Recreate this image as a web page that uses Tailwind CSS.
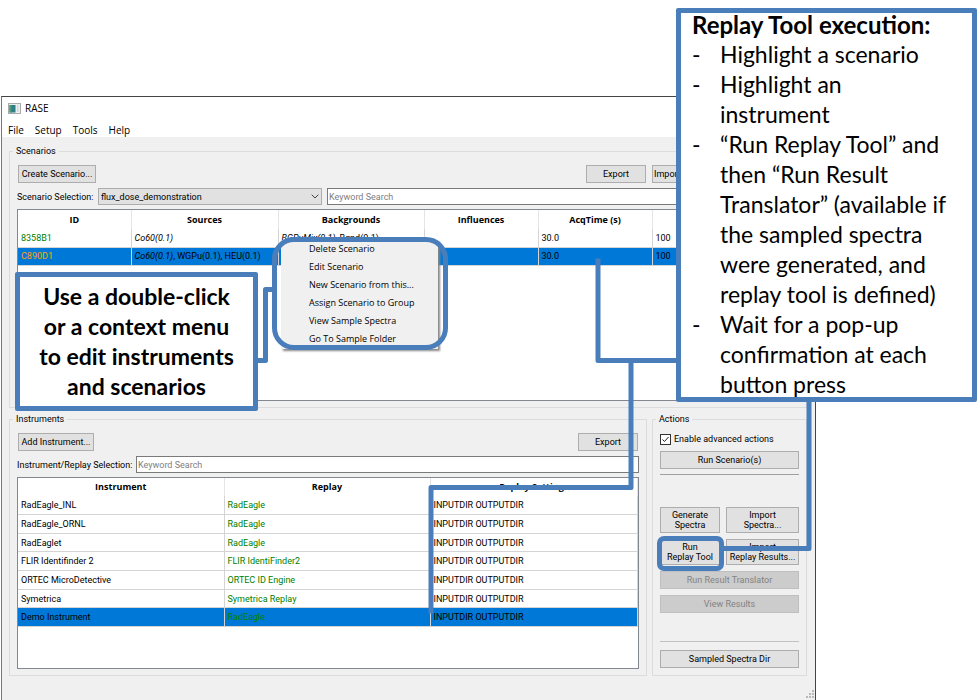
<!DOCTYPE html>
<html lang="en">
<head>
<meta charset="utf-8">
<title>RASE</title>
<script src="https://cdn.jsdelivr.net/npm/@tailwindcss/browser@4"></script>
</head>
<body class="bg-white">
<div class="relative min-h-screen overflow-hidden pt-24 pl-px pr-[163px] font-[Roboto,'Liberation_Sans',sans-serif] text-[9px] leading-3 text-black">

  <!-- Application window -->
  <main class="flex min-h-[604px] flex-col border border-[#444] border-l-[#777] bg-[#f0f0f0]">
    <header class="bg-white font-['Open_Sans',sans-serif]">
      <div class="flex h-[22px] items-center gap-1 pl-[6px]">
        <svg class="h-[11px] w-[13px]" viewBox="0 0 13 11" aria-hidden="true">
          <rect x=".5" y=".5" width="12" height="10" fill="#eee" stroke="#aaa"/>
          <rect x="1.500" y="2" width="6" height="7.500" fill="#2f7f86"/>
          <rect x="1.500" y="2" width="2" height="7.500" fill="#4a9a78"/>
          <rect x="9" y="2" width="1.500" height="7" fill="#c8dce4"/>
        </svg>
        <h1 class="text-[10px]">RASE</h1>
      </div>
      <nav class="flex h-[18px] items-center gap-[11px] pt-[3px] pl-[6px] text-[10px]">
        <a href="#">File</a><a href="#">Setup</a><a href="#">Tools</a><a href="#">Help</a>
      </nav>
    </header>

    <div class="flex flex-1 flex-col gap-[5px] pt-2 pr-2 pb-6 pl-[7px]">
      <fieldset class="border border-[#dcdcdc] px-[7px] pb-[6px]">
        <legend class="-ml-1 px-[3px]">Scenarios</legend>
        <div class="flex gap-[6px] pt-2 pl-px">
          <button class="h-[18px] w-[78px] border border-[#adadad] bg-[#e1e1e1]">Create Scenario...</button>
          <button class="ml-auto h-[18px] w-[60px] border border-[#adadad] bg-[#e1e1e1]">Export</button>
          <button class="h-[18px] w-[147px] border border-[#adadad] bg-[#e1e1e1] pl-px text-left">Import...</button>
        </div>
        <div class="mt-[5px] flex h-[17px] items-center">
          <label for="scenario" class="w-[81px]">Scenario Selection:</label>
          <div class="relative h-[17px] w-56">
            <select id="scenario" class="h-full w-full appearance-none border border-[#adadad] bg-[#e1e1e1] pl-[2px]"><option>flux_dose_demonstration</option></select>
            <svg class="pointer-events-none absolute top-[6px] right-[3px] h-[5px] w-2" viewBox="0 0 8 5" fill="none" stroke="#444" aria-hidden="true"><path d="M.7.7 4 4 7.300.7"/></svg>
          </div>
          <input aria-label="Search scenarios" placeholder="Keyword Search" class="ml-[5px] h-[17px] min-w-0 flex-1 border border-[#7a7a7a] bg-white pl-px placeholder:text-[#808080]">
        </div>
        <div class="mt-1 min-h-48 border border-[#828790] bg-white">
          <table class="h-14 w-full table-fixed border-collapse">
            <colgroup><col class="w-[113px]"><col class="w-[147px]"><col class="w-[146px]"><col class="w-[114px]"><col class="w-[114px]"><col></colgroup>
            <thead class="font-['Open_Sans',sans-serif]">
              <tr class="h-[19px] *:border-r *:border-[#e5e5e5] *:p-0 *:font-bold"><th>ID</th><th>Sources</th><th>Backgrounds</th><th>Influences</th><th>AcqTime (s)</th><th></th></tr>
            </thead>
            <tbody class="*:h-[18px] *:*:border-r *:*:border-b *:*:border-[#d4d4d4] *:*:p-0 *:*:pl-[3px]">
              <tr><td class="text-[#008000]">8358B1</td><td><i>Co60(0.1)</i></td><td><i>BGPuMix(0.1)</i>, Bgnd(0.1)</td><td></td><td>30.0</td><td>100</td></tr>
              <tr class="bg-[#0078d7]"><td class="text-[#ffa500]">C890D1</td><td><i>Co60(0.1)</i>, WGPu(0.1), HEU(0.1)</td><td></td><td></td><td>30.0</td><td>100</td></tr>
            </tbody>
          </table>
        </div>
      </fieldset>

      <div class="flex gap-[5px]">
        <fieldset class="min-w-0 flex-1 border border-[#dcdcdc] px-[7px] pb-[6px]">
          <legend class="-ml-1 px-[3px]">Instruments</legend>
          <div class="flex justify-between px-px pt-2">
            <button class="h-[18px] w-[76px] border border-[#adadad] bg-[#e1e1e1]">Add Instrument...</button>
            <button class="h-[18px] w-[60px] border border-[#adadad] bg-[#e1e1e1]">Export</button>
          </div>
          <div class="mt-[5px] flex h-[17px] items-center">
            <label for="instrument" class="w-[119px]">Instrument/Replay Selection:</label>
            <input id="instrument" placeholder="Keyword Search" class="h-[17px] min-w-0 flex-1 border border-[#7a7a7a] bg-white pl-px placeholder:text-[#808080]">
          </div>
          <div class="mt-1 min-h-48 border border-[#828790] bg-white">
            <table class="h-[149px] w-full table-fixed border-collapse">
              <colgroup><col class="w-[206px]"><col class="w-[206px]"><col></colgroup>
              <thead class="font-['Open_Sans',sans-serif]">
                <tr class="h-[18px] *:border-r *:border-[#e5e5e5] *:p-0 *:font-bold"><th>Instrument</th><th>Replay</th><th>Replay Settings</th></tr>
              </thead>
              <tbody class="*:h-[18px] *:*:border-r *:*:border-b *:*:border-[#d4d4d4] *:*:p-0 *:*:pl-[3px]">
                <tr><td>RadEagle_INL</td><td class="text-[#008000]">RadEagle</td><td>INPUTDIR OUTPUTDIR</td></tr>
                <tr><td>RadEagle_ORNL</td><td class="text-[#008000]">RadEagle</td><td>INPUTDIR OUTPUTDIR</td></tr>
                <tr><td>RadEaglet</td><td class="text-[#008000]">RadEagle</td><td>INPUTDIR OUTPUTDIR</td></tr>
                <tr><td>FLIR Identifinder 2</td><td class="text-[#008000]">FLIR IdentiFinder2</td><td>INPUTDIR OUTPUTDIR</td></tr>
                <tr><td>ORTEC MicroDetective</td><td class="text-[#008000]">ORTEC ID Engine</td><td>INPUTDIR OUTPUTDIR</td></tr>
                <tr><td>Symetrica</td><td class="text-[#008000]">Symetrica Replay</td><td>INPUTDIR OUTPUTDIR</td></tr>
                <tr class="bg-[#0078d7]"><td>Demo Instrument</td><td class="text-[#008000]">RadEagle</td><td>INPUTDIR OUTPUTDIR</td></tr>
              </tbody>
            </table>
          </div>
        </fieldset>

        <fieldset class="w-[155px] border border-[#dcdcdc] px-[7px] pb-[6px]">
          <legend class="-ml-1 px-[3px]">Actions</legend>
          <div class="flex items-center gap-[3px] pt-2">
            <span class="relative size-[11px]">
              <input id="advanced" type="checkbox" checked class="block size-[11px] appearance-none border border-[#333] bg-white">
              <svg class="pointer-events-none absolute inset-0" viewBox="0 0 11 11" fill="none" stroke="#222" aria-hidden="true"><path d="M2.500 5.500 4.500 7.500 8.500 3"/></svg>
            </span>
            <label for="advanced">Enable advanced actions</label>
          </div>
          <button class="mt-[6px] h-[18px] w-full border border-[#adadad] bg-[#e1e1e1]">Run Scenario(s)</button>
          <hr class="mt-[5px] border-[#a0a0a0]">
          <div class="mt-8 grid grid-cols-[60px_1fr] gap-[6px]">
            <button class="h-[26px] border border-[#adadad] bg-[#e1e1e1] leading-[10px]">Generate<br>Spectra</button>
            <button class="h-[26px] border border-[#adadad] bg-[#e1e1e1] leading-[10px]">Import<br>Spectra...</button>
            <button class="h-[26px] border border-[#adadad] bg-[#e1e1e1] leading-[10px]">Run<br>Replay Tool</button>
            <button class="h-[26px] border border-[#adadad] bg-[#e1e1e1] leading-[10px]">Import<br>Replay Results...</button>
          </div>
          <button disabled class="mt-[6px] h-[18px] w-full border border-[#bfbfbf] bg-[#cccccc] text-[#838383]">Run Result Translator</button>
          <button disabled class="mt-[6px] h-[18px] w-full border border-[#bfbfbf] bg-[#cccccc] text-[#838383]">View Results</button>
          <hr class="mt-7 border-[#c0c0c0]">
          <button class="mt-2 h-[18px] w-full border border-[#adadad] bg-[#e1e1e1]">Sampled Spectra Dir</button>
        </fieldset>
      </div>
    </div>
  </main>

  <!-- Resize grip -->
  <svg class="absolute top-[690px] left-[806px] h-2 w-2" viewBox="0 0 8 8" fill="#b8b8b8" aria-hidden="true"><path d="M6 0h2v2H6zM3 3h2v2H3zM6 3h2v2H6zM0 6h2v2H0zM3 6h2v2H3zM6 6h2v2H6z"/></svg>

  <!-- Context menu -->
  <menu class="absolute top-[240px] left-[281px] w-[157px] bg-[#f0f0f0] pb-px pl-7 font-['Open_Sans',sans-serif] leading-[18px] shadow-[2px_2px_2px_#888]">
    <li>Delete Scenario</li>
    <li>Edit Scenario</li>
    <li>New Scenario from this...</li>
    <li>Assign Scenario to Group</li>
    <li>View Sample Spectra</li>
    <li>Go To Sample Folder</li>
  </menu>
  <div class="absolute top-[237px] left-[272px] h-[113px] w-[176px] rounded-[22px] border-[5px] border-[#4a7ebb]"></div>
  <div class="absolute top-[536px] left-[657px] h-[35px] w-[67px] rounded-[7px] border-[5px] border-[#4a7ebb]"></div>

  <!-- Connector lines between callouts and controls -->
  <svg class="pointer-events-none absolute top-0 left-0 h-[700px] w-[979px]" viewBox="0 0 979 700" fill="none" stroke="#4a7ebb" stroke-width="5" stroke-linejoin="round" aria-hidden="true">
    <path d="M256 360.500h9.500V289.500H274"/>
    <path d="M598 258.500V360.500H678"/>
    <path d="M631 360.500V487.500H431V613.500"/>
    <path d="M809 399V548.500H722"/>
  </svg>

  <!-- Callouts -->
  <aside class="absolute top-[272px] left-[15px] w-[243px] rounded-xs border-[5px] border-[#4a7ebb] bg-white pt-1 pb-[5px] text-center font-[Lato,sans-serif] text-[23px] leading-[30px] font-bold">Use a double-click<br>or a context menu<br>to edit instruments<br>and scenarios</aside>

  <aside class="absolute top-2 left-[676px] w-[301px] rounded-xs border-[5px] border-[#4a7ebb] bg-white pl-[11px] font-[Lato,sans-serif] text-[23px] leading-[30px] whitespace-nowrap">
    <h2 class="-mt-[3px] text-[24px] font-bold">Replay Tool execution:</h2>
    <ul class="-mt-px -mb-[2px] *:flex *:before:w-7 *:before:content-['-']">
      <li>Highlight a scenario</li>
      <li><p>Highlight an<br>instrument</p></li>
      <li><p>“Run Replay Tool” and<br>then “Run Result<br>Translator” (available if<br>the sampled spectra<br>were generated, and<br>replay tool is defined)</p></li>
      <li><p>Wait for a pop-up<br>confirmation at each<br>button press</p></li>
    </ul>
  </aside>
</div>
</body>
</html>
